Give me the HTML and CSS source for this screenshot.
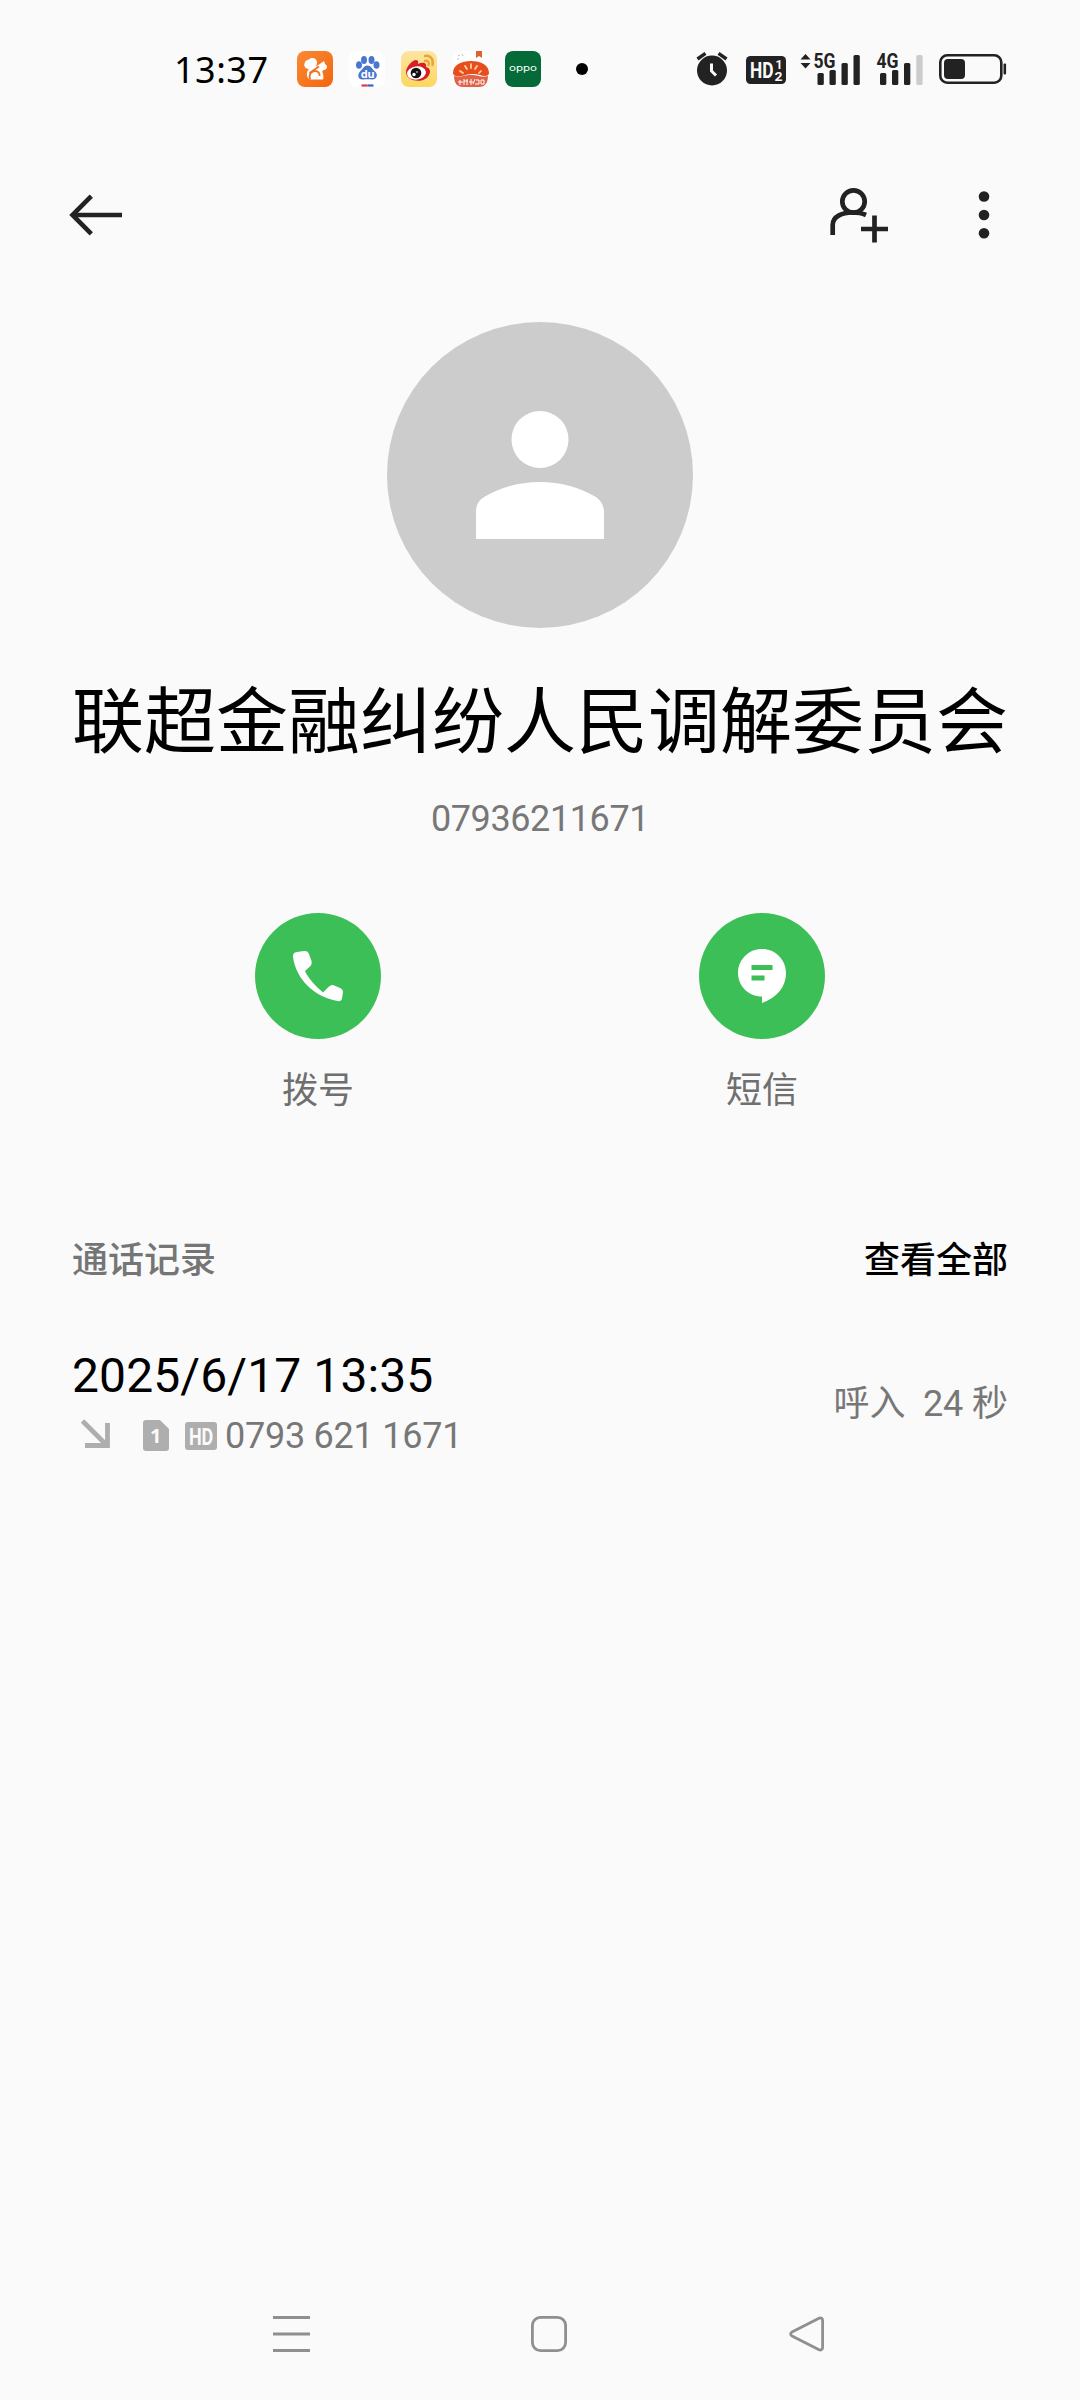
FILE: index.html
```html
<!DOCTYPE html>
<html lang="zh-CN">
<head>
<meta charset="utf-8">
<title>联系人详情</title>
<link rel="stylesheet" href="styles.css">
</head>
<body>
<div class="screen">
  <header class="status">
    <span class="clock">13:37</span>
    <div class="apps">
      <svg width="36" height="36" viewBox="0 0 36 36">
        <defs><linearGradient id="uc" x1="0" y1="0" x2="1" y2="1"><stop offset="0" stop-color="#f98a35"/><stop offset="1" stop-color="#f4650f"/></linearGradient></defs>
        <rect width="36" height="36" rx="8" fill="url(#uc)"/>
        <path d="M12.500 28.500C9 26 9 21 12 18C9 18 6.500 15.500 7.500 12.500C8 9.500 10.500 8.500 12 8.500C15 5.500 20 7.500 20 11.500C20 13.500 19 15 18.500 16L23.500 12.500L27 10L28 13C31 14.500 30.500 18.500 27 19C24.500 19.500 25.500 21.500 26 23C26.500 25 26.500 27 26 28.500Z" fill="#fff"/>
        <path d="M13 28.500C11.500 23 14.500 20 18 20C21 20 23 22 22.500 25M12.500 22L22 15.500" fill="none" stroke="#f4701f" stroke-width="1.800"/>
      </svg>
      <svg width="36" height="36" viewBox="0 0 36 36">
        <rect width="36" height="36" rx="8" fill="#fff"/>
        <g fill="#4a76d0"><ellipse cx="10" cy="14" rx="3" ry="3.800"/><ellipse cx="15" cy="9" rx="3" ry="4"/><ellipse cx="22.500" cy="9" rx="3" ry="4"/><ellipse cx="27.500" cy="14" rx="3" ry="3.800"/><path d="M18.500 14.500C22 14.500 23 18 26 20.500C30 24 27 29 23 28.500C20 28 17 28 14 28.500C9 29 8 24 11 20.500C14 18 15 14.500 18.500 14.500Z"/></g>
        <text x="18.700" y="27" class="t-du">du</text>
        <path d="M12.500 34.500H18.500" stroke="#d8394a" stroke-width="2.200"/><path d="M18.500 34.500H24.500" stroke="#3c62c8" stroke-width="2.200"/>
      </svg>
      <svg width="36" height="36" viewBox="0 0 36 36">
        <defs><linearGradient id="wb" x1="0" y1="0" x2="0" y2="1"><stop offset="0" stop-color="#fce5a4"/><stop offset="1" stop-color="#fcd75d"/></linearGradient></defs>
        <rect width="36" height="36" rx="8" fill="url(#wb)"/>
        <path d="M5 21C5 16 11 9 15 9C18 9 17 12 17 13C21 11 26 11 25 16C29 17 30 20 28 24C24 33 5 31 5 21Z" fill="#d81f28"/>
        <ellipse cx="15.500" cy="22" rx="9.500" ry="6.600" fill="#fff" transform="rotate(-8 15.500 22)"/>
        <circle cx="15" cy="22" r="5.300" fill="#111"/><circle cx="13" cy="23.500" r="1.700" fill="#fff"/><circle cx="16" cy="21" r=".8" fill="#fff"/>
        <path d="M24 5C29 4 33 8 31.500 14M24 10C27 9 28.500 11 27.500 14" fill="none" stroke="#eaa43a" stroke-width="2.400" stroke-linecap="round"/>
      </svg>
      <svg width="36" height="36" viewBox="0 0 36 36">
        <rect width="36" height="36" rx="8" fill="#fff"/>
        <path d="M23 0H29V7L26 5L23 7Z" fill="#dc6331"/>
        <path d="M5 5L7 4M9 3L10 5M4 8H6" stroke="#bbb" stroke-width="1"/>
        <path d="M0 22C0 14 8 10 18 10C28 10 36 14 36 22C36 25 32 26 27 24C20 22 15 23 9 25C4 26 0 25 0 22Z" fill="#e84e1d"/>
        <path d="M18 13V17M12 15L14 18M24 15L22 18M7 20L10 22M28 20L26 22" stroke="#ffd9a0" stroke-width="1.700" stroke-linecap="round"/>
        <path d="M1 25C8 27 10 24 18 24C26 24 29 27 35 25C35 33 31 36 26 36H10C4 36 1 32 1 25Z" fill="#df6249"/>
        <path d="M7 29V34M5 31H10M11 28V34M11 30H15M14 28V34M18 28V34M16 31H20M22 28L20 33M23 29H26V33H22M28 29H31V33H28Z" fill="none" stroke="#fff" stroke-width="1"/>
      </svg>
      <svg width="36" height="36" viewBox="0 0 36 36">
        <rect width="36" height="36" rx="8" fill="#046a38"/>
        <text x="18" y="20" textLength="28" lengthAdjust="spacingAndGlyphs" class="t-oppo">oppo</text>
      </svg>
    </div>
    <span class="dot"></span>
    <div class="system">
      <svg width="32" height="34" viewBox="0 0 32 34" fill="none" stroke="#222">
        <circle cx="16" cy="18.500" r="15" fill="#222" stroke="none"/>
        <path d="M1.500 7L9.500 1.300M22.500 1.300L30.500 7" stroke-width="3.400"/>
        <path d="M15.500 11.500V19L20 23.500" stroke="#fafafa" stroke-width="3"/>
      </svg>
      <svg class="hd" width="40" height="28" viewBox="0 0 40 28">
        <rect width="40" height="28" rx="4.500" fill="#222"/>
        <text x="4" y="21.500" textLength="23.500" lengthAdjust="spacingAndGlyphs" class="t-hd">HD</text>
        <text x="29.500" y="12.700" textLength="7" lengthAdjust="spacingAndGlyphs" class="t-sub">1</text><text x="28.500" y="25" textLength="8" lengthAdjust="spacingAndGlyphs" class="t-sub">2</text>
      </svg>
      <svg class="sig5" width="60" height="34" viewBox="0 0 60 34" fill="#222">
        <path d="M5.500 3L10.500 8.500H.5ZM5.500 17.500L.5 12H10.500Z"/>
        <text x="13.500" y="17" textLength="22" lengthAdjust="spacingAndGlyphs" class="t-net">5G</text>
        <rect x="17.500" y="22" width="6.300" height="12" rx="1.500"/><rect x="29.500" y="19" width="6.300" height="15" rx="1.500"/><rect x="41.500" y="12" width="6.300" height="22" rx="1.500"/><rect x="53.500" y="4" width="6.300" height="30" rx="1.500"/>
      </svg>
      <svg class="sig4" width="47" height="34" viewBox="0 0 47 34" fill="#222">
        <text x=".5" y="17" textLength="22" lengthAdjust="spacingAndGlyphs" class="t-net">4G</text>
        <rect x="4" y="22" width="6.300" height="12" rx="1.500"/><rect x="16" y="19" width="6.300" height="15" rx="1.500"/><rect x="28" y="12" width="6.300" height="22" rx="1.500"/><rect x="40.300" y="4" width="6.300" height="30" rx="1.500" fill="#ccc"/>
      </svg>
      <svg class="bat" width="68" height="30" viewBox="0 0 68 30">
        <rect x="1.300" y="1.300" width="61" height="27.400" rx="7" fill="none" stroke="#222" stroke-width="2.600"/>
        <rect x="5" y="5" width="21" height="20" rx="4" fill="#222"/><rect x="64.500" y="9.500" width="2.600" height="11" rx="1" fill="#222"/>
      </svg>
    </div>
  </header>

  <nav class="toolbar">
    <svg width="54" height="46" viewBox="0 0 54 46" fill="none" stroke="#222" stroke-width="4.600"><path d="M53 23H4"/><path d="M22.300 4.200L3.500 23L22.300 41.800"/></svg>
    <svg class="add" width="58" height="56" viewBox="0 0 58 56" fill="none" stroke="#222" stroke-width="4.700">
      <circle cx="23.500" cy="14.500" r="11.200"/><path d="M2.700 48V38C2.700 29 13 25.500 22 25.500C28 25.500 32 26.200 36 28"/><path d="M44.500 28.500V55.500M31 42H58"/>
    </svg>
    <svg width="12" height="50" viewBox="0 0 12 50" fill="#222"><circle cx="6" cy="6.500" r="5.300"/><circle cx="6" cy="25" r="5.300"/><circle cx="6" cy="43.300" r="5.300"/></svg>
  </nav>

  <section class="profile">
    <svg class="avatar" width="306" height="306" viewBox="0 0 306 306">
      <circle cx="153" cy="153" r="153" fill="#ccc"/>
      <g fill="#fff"><circle cx="153" cy="117.500" r="28.500"/><path d="M89 217V190C89 182 92 178 98 174.500C114 165 133 160 153 160C173 160 192 165 208 174.500C214 178 217 184 217 190V217Z"/></g>
    </svg>
    <h1>联超金融纠纷人民调解委员会</h1>
    <p class="phone">07936211671</p>
  </section>

  <section class="actions">
    <div class="action">
      <span class="circle"><svg width="52" height="52" viewBox="0 0 52 52" fill="#fff"><path d="M5 2L12 1C15 .7 16 2 17 4L19.500 11C20 13 19.500 15 18 16.500L13 21C16 28 23 35.500 31 42.500L36 37.500C37.500 36 39 34.800 41 35L48 38C50 39 51 40 51 42L50 48.500C49.700 50.500 48 51.500 45.500 51C22 47 4 29 1 7C.7 4 2 2.300 5 2Z"/></svg></span>
      <span class="label">拨号</span>
    </div>
    <div class="action">
      <span class="circle"><svg width="48" height="54" viewBox="0 0 48 54"><path d="M24 0C37.300 0 48 10.500 48 24C48 38 39 48.500 24 54V47.500C10.700 47.500 0 37.200 0 24C0 10.500 10.700 0 24 0Z" fill="#fff"/><path d="M13.500 18.500H34.500M13.500 29H26.500" stroke="#3dbf57" stroke-width="4.800"/></svg></span>
      <span class="label">短信</span>
    </div>
  </section>

  <section class="history">
    <div class="heading"><span>通话记录</span><span class="all">查看全部</span></div>
    <div class="record">
      <div>
        <div class="date">2025/6/17 13:35</div>
        <div class="detail">
          <svg class="incoming" width="30" height="30" viewBox="0 0 30 30" fill="none" stroke="#aeaeae" stroke-width="4.800"><path d="M1.500 2L25.500 26M26.500 4V26.500H4"/></svg>
          <svg class="sim" width="26" height="32" viewBox="0 0 26 32"><path d="M3 0H17L26 9V28C26 30 25 31 23 31H3C1 31 0 30 0 28V3C0 1 1 0 3 0Z" fill="#aeaeae"/><text x="12.500" y="23" class="t-sim">1</text></svg>
          <svg class="hd2" width="32" height="28" viewBox="0 0 32 28"><rect width="32" height="28" rx="3" fill="#aeaeae"/><text x="4" y="22.500" textLength="24" lengthAdjust="spacingAndGlyphs" class="t-hd2">HD</text></svg>
          <span>0793 621 1671</span>
        </div>
      </div>
      <div class="duration">呼入&nbsp; 24 秒</div>
    </div>
  </section>

  <footer class="navbar">
    <svg width="37" height="36" viewBox="0 0 37 36" stroke="#8f8f8f" stroke-width="3"><path d="M0 1.500H37M0 18H37M0 34.500H37"/></svg>
    <svg class="home" width="36" height="36" viewBox="0 0 36 36" fill="none" stroke="#8f8f8f" stroke-width="2.800"><rect x="1.400" y="1.400" width="33.200" height="33.200" rx="8"/></svg>
    <svg class="back" width="36" height="36" viewBox="0 0 36 36" fill="none" stroke="#8f8f8f" stroke-width="2.800"><path d="M30 2.200L3 16C1.200 17 1.200 19 3 20L30 33.700C32 34.500 33.600 33.500 33.600 31.500V4.500C33.600 2.500 32 1.300 30 2.200Z"/></svg>
  </footer>
</div>
</body>
</html>
```
FILE: styles.css
```css
* { box-sizing: border-box; margin: 0; padding: 0; }
body { background: #fafafa; font-family: Roboto, "Noto Sans CJK SC", sans-serif; }
svg { display: block; flex: none; overflow: visible; }
.screen { width: 1080px; height: 2400px; display: flex; flex-direction: column; background: #fafafa; color: #000; }

.status { height: 138px; padding: 0 72px 0 174px; display: flex; align-items: center; flex: none; }
.clock { width: 123px; padding-top: 2px; font: 450 36px/44px "Noto Sans", sans-serif; letter-spacing: .5px; }
.apps { display: flex; gap: 16px; }
.dot { width: 12px; height: 12px; margin-left: 35px; border-radius: 50%; background: #000; }
.system { margin-left: 108px; display: flex; align-items: center; }
.hd { margin: 2px 0 0 18px; }
.sig5 { margin-left: 14px; margin-top: -2px; }
.sig4 { margin-left: 16px; margin-top: -2px; }
.bat { margin-left: 16px; }
.t-du { font: 700 11px "Noto Sans", sans-serif; fill: #fff; text-anchor: middle; }
.t-oppo { font: 400 9px Inter, sans-serif; fill: #fff; text-anchor: middle; }
.t-hd { font: 700 22px Roboto, sans-serif; fill: #fafafa; }
.t-sub { font: 700 13px Roboto, sans-serif; fill: #fafafa; }
.t-net { font: 700 21px Roboto, sans-serif; fill: #222; }

.toolbar { height: 154px; padding: 0 90px 0 69px; display: flex; align-items: center; flex: none; }
.add { margin: 0 90px 0 auto; }

.profile { padding-top: 30px; display: flex; flex-direction: column; align-items: center; }
h1 { margin-top: 53px; font-size: 72px; font-weight: 400; line-height: 84px; white-space: nowrap; }
.phone { margin-top: 32px; font-size: 36px; line-height: 44px; letter-spacing: -.4px; color: #777; }

.actions { margin-top: 72px; padding: 0 96px; display: flex; }
.action { flex: 1; display: flex; flex-direction: column; align-items: center; gap: 30px; }
.circle { width: 126px; height: 126px; border-radius: 50%; background: #3dbf57; display: flex; align-items: center; justify-content: center; }
.label { font-size: 36px; line-height: 44px; color: #6f6f6f; }

.history { margin-top: 126px; padding: 0 72px; }
.heading { display: flex; justify-content: space-between; font-size: 36px; font-weight: 500; line-height: 44px; color: #757575; }
.all { color: #000; }
.record { margin-top: 65px; display: flex; justify-content: space-between; align-items: center; }
.date { font-size: 48px; line-height: 56px; letter-spacing: .1px; }
.detail { margin-top: 10px; display: flex; align-items: center; font-size: 36px; line-height: 44px; letter-spacing: -.25px; color: #777; }
.incoming { margin: 0 32px 4px 9px; }
.sim { margin-right: 16px; }
.hd2 { margin-right: 8px; }
.t-sim { font: 700 20px "Noto Sans", sans-serif; fill: #fafafa; text-anchor: middle; }
.t-hd2 { font: 700 23px Roboto, sans-serif; fill: #fafafa; }
.duration { padding-top: 1px; font-size: 36px; line-height: 44px; letter-spacing: -.1px; color: #777; }

.navbar { height: 132px; margin-top: auto; padding-left: 273px; display: flex; align-items: center; flex: none; }
.home { margin-left: 221px; }
.back { margin-left: 222px; }
```
